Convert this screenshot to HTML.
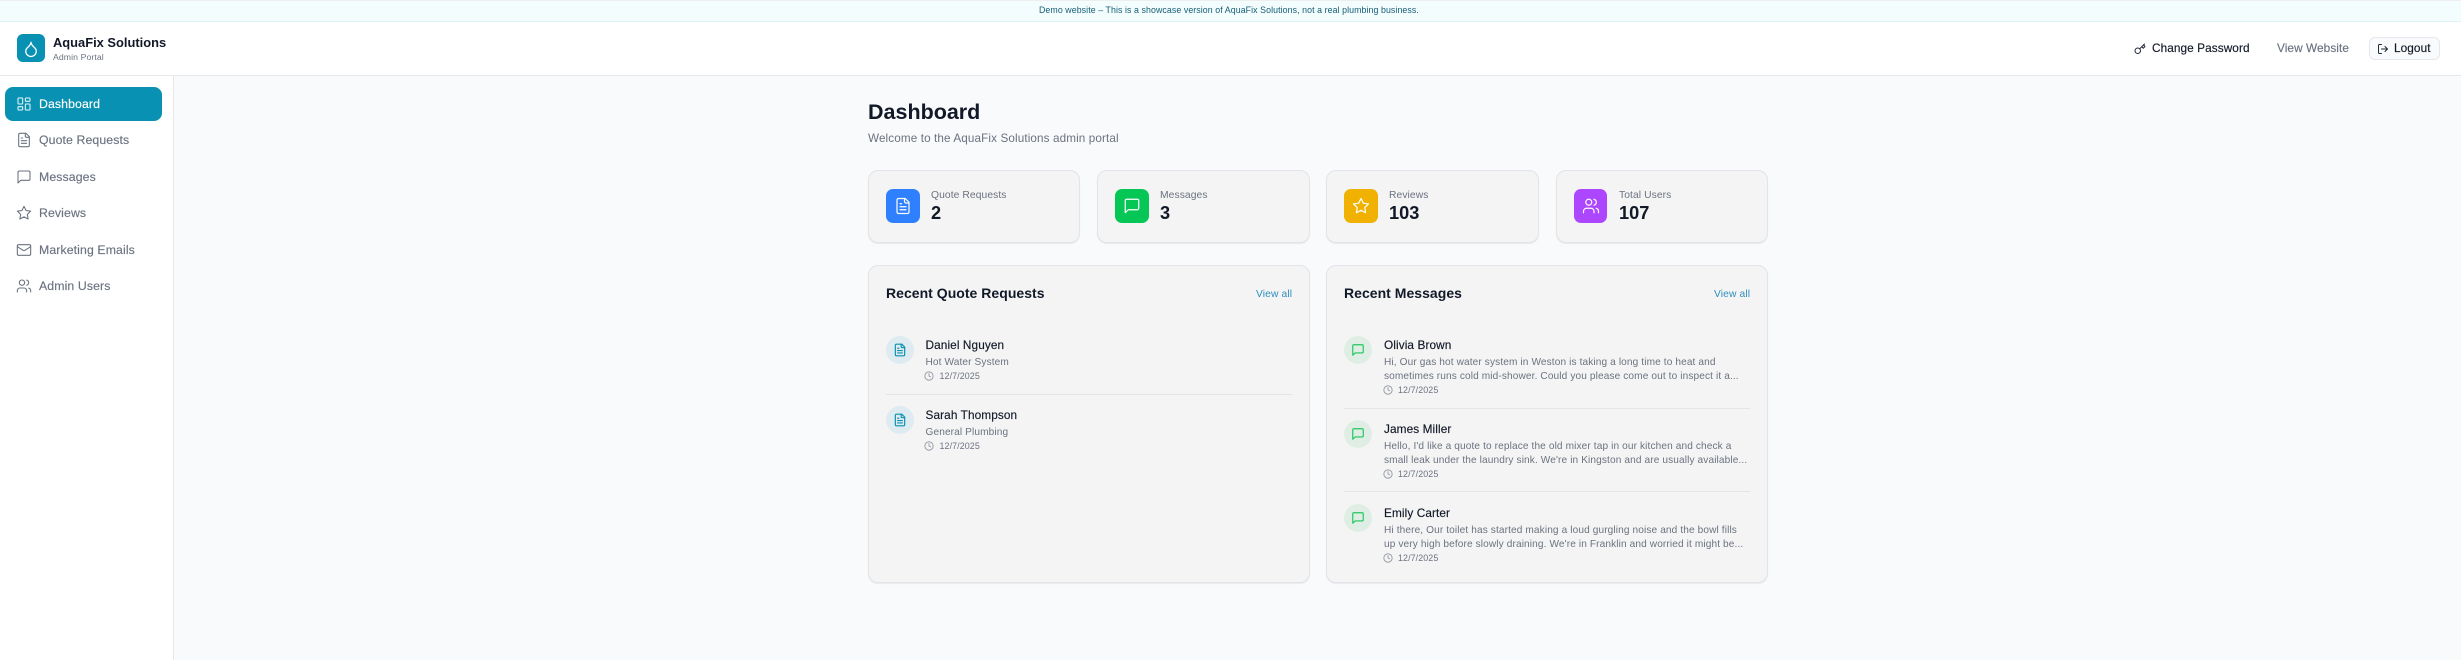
<!DOCTYPE html>
<html lang="en">
<head>
<meta charset="utf-8">
<title>AquaFix Solutions Admin Portal</title>
<style>
html,body{margin:0;padding:0;width:2461px;height:660px;overflow:hidden;background:#f9fafb}
body{position:relative;font-family:"Liberation Sans",sans-serif;color:#111827}
.b{position:absolute;box-sizing:border-box}
.t{position:absolute;white-space:nowrap;line-height:14px;height:14px}
svg.i{position:absolute;fill:none;stroke:currentColor;stroke-width:2;stroke-linecap:round;stroke-linejoin:round}
.nav{font-size:12.3px;color:#6b7280;left:39px;-webkit-text-stroke:.15px currentColor;letter-spacing:.1px}
.card{background:#f4f4f4;border:1px solid #e2e4e8;border-radius:10px;box-shadow:0 1px 1px rgba(0,0,0,.07)}
.ico{border-radius:7px;width:34px;height:34px;top:189px}
.lab{font-size:10.3px;color:#6b7280;top:189px;letter-spacing:.08px}
.val{font-size:18.2px;font-weight:bold;top:206px;color:#111827}
.h{font-size:14px;font-weight:bold;top:286px;color:#111827;letter-spacing:.03px}
.va{font-size:10.3px;color:#2b8fbd;top:288px;letter-spacing:.1px}
.c{width:28px;height:28px;border-radius:50%}
.q{background:#deebf0;color:#0891b2}
.m{background:#dfeee5;color:#22c55e}
.n{font-size:11.8px;color:#111827;-webkit-text-stroke:.15px currentColor;letter-spacing:.1px}
.s{font-size:10.1px;color:#6b7280;letter-spacing:.12px}
.d{font-size:8.9px;color:#6b7280;letter-spacing:.1px}
.l{height:1px;background:#e2e4e8}
.hd{font-size:11.8px;-webkit-text-stroke:.15px currentColor;letter-spacing:.08px}
.ck{color:#8b919b}
</style>
</head>
<body>
<svg width="0" height="0" style="position:absolute">
<symbol id="grid" viewBox="0 0 24 24"><rect x="3" y="3" width="7" height="9" rx="1"/><rect x="14" y="3" width="7" height="5" rx="1"/><rect x="14" y="12" width="7" height="9" rx="1"/><rect x="3" y="16" width="7" height="5" rx="1"/></symbol>
<symbol id="file" viewBox="0 0 24 24"><path d="M15 2H6a2 2 0 0 0-2 2v16a2 2 0 0 0 2 2h12a2 2 0 0 0 2-2V7Z"/><path d="M14 2v4a2 2 0 0 0 2 2h4"/><path d="M10 9H8"/><path d="M16 13H8"/><path d="M16 17H8"/></symbol>
<symbol id="msg" viewBox="0 0 24 24"><path d="M21 15a2 2 0 0 1-2 2H7l-4 4V5a2 2 0 0 1 2-2h14a2 2 0 0 1 2 2z"/></symbol>
<symbol id="star" viewBox="0 0 24 24"><polygon points="12 2 15.09 8.26 22 9.27 17 14.14 18.18 21.02 12 17.77 5.82 21.02 7 14.14 2 9.27 8.91 8.26 12 2"/></symbol>
<symbol id="mail" viewBox="0 0 24 24"><rect x="2" y="4" width="20" height="16" rx="2"/><path d="m22 7-8.97 5.7a1.94 1.94 0 0 1-2.06 0L2 7"/></symbol>
<symbol id="users" viewBox="0 0 24 24"><path d="M16 21v-2a4 4 0 0 0-4-4H6a4 4 0 0 0-4 4v2"/><circle cx="9" cy="7" r="4"/><path d="M22 21v-2a4 4 0 0 0-3-3.87"/><path d="M16 3.13a4 4 0 0 1 0 7.75"/></symbol>
<symbol id="drop" viewBox="0 0 24 24"><path d="M12 22a7 7 0 0 0 7-7c0-2-1-3.9-3-5.5s-3.5-4-4-6.5c-.5 2.5-2 4.9-4 6.5C6 11.1 5 13 5 15a7 7 0 0 0 7 7z"/></symbol>
<symbol id="key" viewBox="0 0 24 24"><path d="m15.5 7.5 3 3L22 7l-3-3"/><path d="m21 2-9.6 9.6"/><circle cx="7.5" cy="15.5" r="5.5"/></symbol>
<symbol id="out" viewBox="0 0 24 24"><path d="M9 21H5a2 2 0 0 1-2-2V5a2 2 0 0 1 2-2h4"/><polyline points="16 17 21 12 16 7"/><line x1="21" y1="12" x2="9" y2="12"/></symbol>
<symbol id="clock" viewBox="0 0 24 24"><circle cx="12" cy="12" r="10"/><polyline points="12 6 12 12 16 14"/></symbol>
</svg>

<!-- banner -->
<div class="b" style="left:0;top:0;width:2461px;height:1px;background:#eeeeee"></div>
<div class="b" style="left:0;top:1px;width:2461px;height:21px;background:#f3fdfe;border-bottom:1px solid #dff3f8"></div>
<div class="t" style="left:1039px;top:3px;font-size:8.8px;color:#155e75;letter-spacing:.08px">Demo website – This is a showcase version of AquaFix Solutions, not a real plumbing business.</div>

<!-- header -->
<div class="b" style="left:0;top:22px;width:2461px;height:54px;background:#fff;border-bottom:1px solid #e5e7eb"></div>
<div class="b" style="left:17px;top:34px;width:28px;height:28px;border-radius:6px;background:#0891b2"></div>
<svg class="i" style="left:22px;top:39.5px;color:#fff;stroke-width:1.7" width="18" height="18"><use href="#drop"/></svg>
<div class="t" style="left:53px;top:35.5px;font-size:12.9px;font-weight:bold;color:#111827">AquaFix Solutions</div>
<div class="t" style="left:53px;top:50px;font-size:8.7px;color:#6b7280;letter-spacing:.09px">Admin Portal</div>

<svg class="i" style="left:2134px;top:42.5px;color:#1f2937" width="12" height="12"><use href="#key"/></svg>
<div class="t hd" style="left:2152px;top:41px;color:#111827">Change Password</div>
<div class="t hd" style="left:2277px;top:41px;color:#6b7280">View Website</div>
<div class="b" style="left:2369px;top:37px;width:71px;height:23px;border-radius:6px;background:#f9fafb;border:1px solid #e5e7eb"></div>
<svg class="i" style="left:2376.5px;top:42.5px;color:#1f2937" width="12" height="12"><use href="#out"/></svg>
<div class="t hd" style="left:2394px;top:41px;color:#111827">Logout</div>

<!-- sidebar -->
<div class="b" style="left:0;top:76px;width:174px;height:584px;background:#fff;border-right:1px solid #e5e7eb"></div>
<div class="b" style="left:5px;top:87px;width:157px;height:34px;border-radius:8px;background:#0891b2"></div>
<svg class="i" style="left:16px;top:96px;color:#e6f6fa;stroke-width:1.6" width="16" height="16"><use href="#grid"/></svg>
<div class="t nav" style="top:97px;color:#fff">Dashboard</div>
<svg class="i" style="left:16px;top:132px;color:#6b7280;stroke-width:1.6" width="16" height="16"><use href="#file"/></svg>
<div class="t nav" style="top:133px">Quote Requests</div>
<svg class="i" style="left:16px;top:169px;color:#6b7280;stroke-width:1.6" width="16" height="16"><use href="#msg"/></svg>
<div class="t nav" style="top:170px">Messages</div>
<svg class="i" style="left:16px;top:205px;color:#6b7280;stroke-width:1.6" width="16" height="16"><use href="#star"/></svg>
<div class="t nav" style="top:206px">Reviews</div>
<svg class="i" style="left:16px;top:242px;color:#6b7280;stroke-width:1.6" width="16" height="16"><use href="#mail"/></svg>
<div class="t nav" style="top:243px">Marketing Emails</div>
<svg class="i" style="left:16px;top:278px;color:#6b7280;stroke-width:1.6" width="16" height="16"><use href="#users"/></svg>
<div class="t nav" style="top:279px">Admin Users</div>

<!-- title -->
<div class="t" style="left:868px;top:101px;line-height:22px;height:22px;font-size:21.5px;font-weight:bold;color:#111827">Dashboard</div>
<div class="t" style="left:868px;top:132px;font-size:11.7px;color:#6b7280;letter-spacing:.12px">Welcome to the AquaFix Solutions admin portal</div>

<!-- stats -->
<div class="b card" style="left:868px;top:170px;width:212px;height:73px"></div>
<div class="b ico" style="left:886px;background:#2f80ff"></div>
<svg class="i" style="left:894px;top:197px;color:#fff;stroke-width:1.6" width="18" height="18"><use href="#file"/></svg>
<div class="t lab" style="left:931px">Quote Requests</div>
<div class="t val" style="left:931px">2</div>

<div class="b card" style="left:1097px;top:170px;width:213px;height:73px"></div>
<div class="b ico" style="left:1115px;background:#06c755"></div>
<svg class="i" style="left:1123px;top:197px;color:#fff;stroke-width:1.6" width="18" height="18"><use href="#msg"/></svg>
<div class="t lab" style="left:1160px">Messages</div>
<div class="t val" style="left:1160px">3</div>

<div class="b card" style="left:1326px;top:170px;width:213px;height:73px"></div>
<div class="b ico" style="left:1344px;background:#f0b100"></div>
<svg class="i" style="left:1352px;top:197px;color:#fff;stroke-width:1.6" width="18" height="18"><use href="#star"/></svg>
<div class="t lab" style="left:1389px">Reviews</div>
<div class="t val" style="left:1389px">103</div>

<div class="b card" style="left:1556px;top:170px;width:212px;height:73px"></div>
<div class="b ico" style="left:1574px;width:33px;background:#ad46ff"></div>
<svg class="i" style="left:1581.5px;top:197px;color:#fff;stroke-width:1.6" width="18" height="18"><use href="#users"/></svg>
<div class="t lab" style="left:1619px">Total Users</div>
<div class="t val" style="left:1619px">107</div>

<!-- left panel -->
<div class="b card" style="left:868px;top:265px;width:442px;height:318px"></div>
<div class="t h" style="left:886px">Recent Quote Requests</div>
<div class="t va" style="left:1256px">View all</div>

<div class="b c q" style="left:886px;top:336px"></div>
<svg class="i" style="left:893px;top:343px;color:#0891b2" width="14" height="14"><use href="#file"/></svg>
<div class="t n" style="left:925.5px;top:338px">Daniel Nguyen</div>
<div class="t s" style="left:925.5px;top:356px">Hot Water System</div>
<svg class="i ck" style="left:924px;top:371px" width="10" height="10"><use href="#clock"/></svg>
<div class="t d" style="left:939.5px;top:369px">12/7/2025</div>
<div class="b l" style="left:886px;top:394px;width:406px"></div>

<div class="b c q" style="left:886px;top:406px"></div>
<svg class="i" style="left:893px;top:413px;color:#0891b2" width="14" height="14"><use href="#file"/></svg>
<div class="t n" style="left:925.5px;top:408px">Sarah Thompson</div>
<div class="t s" style="left:925.5px;top:426px">General Plumbing</div>
<svg class="i ck" style="left:924px;top:441px" width="10" height="10"><use href="#clock"/></svg>
<div class="t d" style="left:939.5px;top:439px">12/7/2025</div>

<!-- right panel -->
<div class="b card" style="left:1326px;top:265px;width:442px;height:318px"></div>
<div class="t h" style="left:1344px">Recent Messages</div>
<div class="t va" style="left:1714px">View all</div>

<div class="b c m" style="left:1344px;top:336px"></div>
<svg class="i" style="left:1351px;top:343px;color:#22c55e" width="14" height="14"><use href="#msg"/></svg>
<div class="t n" style="left:1384px;top:338px">Olivia Brown</div>
<div class="t s" style="left:1384px;top:356px">Hi, Our gas hot water system in Weston is taking a long time to heat and</div>
<div class="t s" style="left:1384px;top:370px">sometimes runs cold mid-shower. Could you please come out to inspect it a...</div>
<svg class="i ck" style="left:1383px;top:385px" width="10" height="10"><use href="#clock"/></svg>
<div class="t d" style="left:1398px;top:383px">12/7/2025</div>
<div class="b l" style="left:1344px;top:408px;width:406px"></div>

<div class="b c m" style="left:1344px;top:420px"></div>
<svg class="i" style="left:1351px;top:427px;color:#22c55e" width="14" height="14"><use href="#msg"/></svg>
<div class="t n" style="left:1384px;top:422px">James Miller</div>
<div class="t s" style="left:1384px;top:440px">Hello, I'd like a quote to replace the old mixer tap in our kitchen and check a</div>
<div class="t s" style="left:1384px;top:454px">small leak under the laundry sink. We're in Kingston and are usually available...</div>
<svg class="i ck" style="left:1383px;top:469px" width="10" height="10"><use href="#clock"/></svg>
<div class="t d" style="left:1398px;top:467px">12/7/2025</div>
<div class="b l" style="left:1344px;top:491px;width:406px"></div>

<div class="b c m" style="left:1344px;top:504px"></div>
<svg class="i" style="left:1351px;top:511px;color:#22c55e" width="14" height="14"><use href="#msg"/></svg>
<div class="t n" style="left:1384px;top:506px">Emily Carter</div>
<div class="t s" style="left:1384px;top:524px">Hi there, Our toilet has started making a loud gurgling noise and the bowl fills</div>
<div class="t s" style="left:1384px;top:538px">up very high before slowly draining. We're in Franklin and worried it might be...</div>
<svg class="i ck" style="left:1383px;top:553px" width="10" height="10"><use href="#clock"/></svg>
<div class="t d" style="left:1398px;top:551px">12/7/2025</div>
</body>
</html>
